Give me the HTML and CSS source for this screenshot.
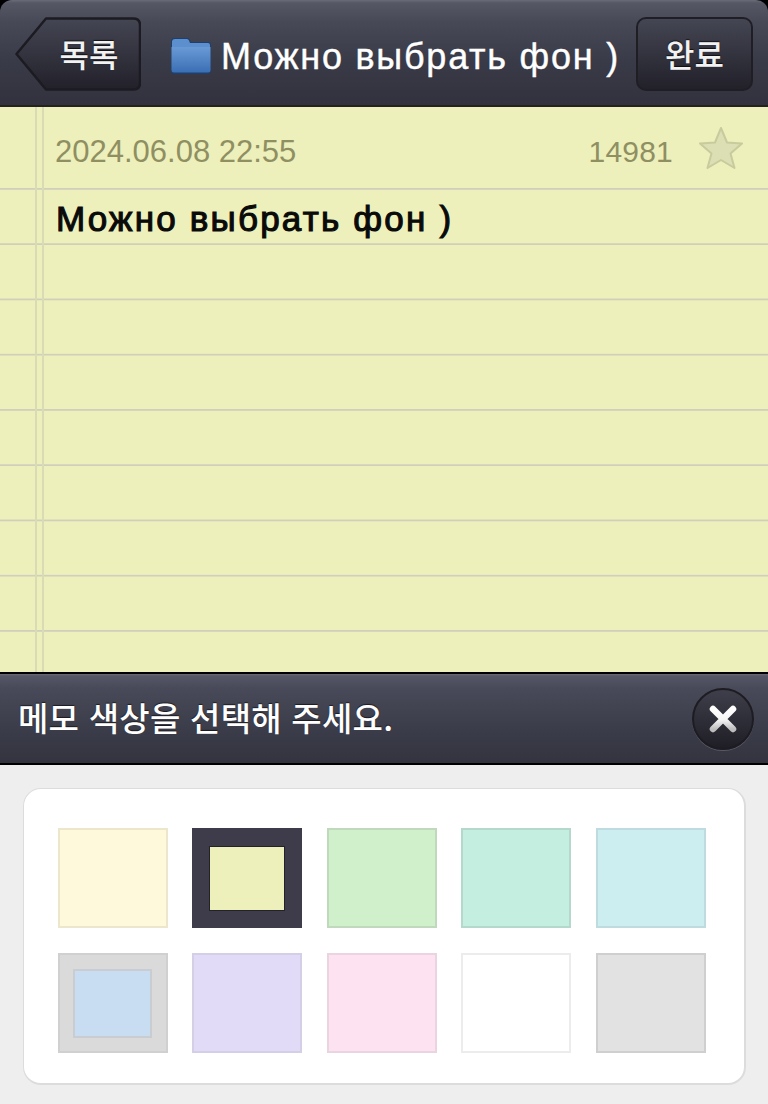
FILE: index.html
```html
<!DOCTYPE html>
<html lang="ko">
<head>
<meta charset="utf-8">
<title>메모</title>
<link rel="stylesheet" href="styles.css">
</head>
<body>
<div class="app">
  <header class="topbar">
    <button class="btn back">
      <svg class="back-shape" viewBox="0 0 126 74" aria-hidden="true">
        <defs><linearGradient id="bk" x1="0" y1="0" x2="0" y2="1"><stop offset="0" stop-color="#444653"/><stop offset="1" stop-color="#22212a"/></linearGradient></defs>
        <path d="M1.500 37 L31 1.500 H118 Q125 1.500 125 8 V66 Q125 72.500 118 72.500 H31 Z" fill="url(#bk)" stroke="#1c1b22" stroke-width="2.500" stroke-linejoin="round"/>
      </svg>
      <span class="btn-label">목록</span>
    </button>
    <div class="title">
      <svg class="folder" viewBox="0 0 42 38" aria-hidden="true">
        <defs><linearGradient id="fd" x1="0" y1="0" x2="0" y2="1"><stop offset="0" stop-color="#6a9ad6"/><stop offset="1" stop-color="#3a6fb4"/></linearGradient></defs>
        <path d="M1 5 Q1 1 4 1 H17 Q19 1 20 3 L21 5 H38 Q41 5 41 8 V34 Q41 37 38 37 H4 Q1 37 1 34 Z" fill="#1f3f6c"/>
        <path d="M2 5 Q2 2 5 2 H17 Q18.500 2 19 3.500 L20 6 H38 Q40 6 40 8 V12 H2 Z" fill="#5c8fce"/>
        <path d="M1.500 10 H40.500 V33 Q40.500 35.500 38 35.500 H4 Q1.500 35.500 1.500 33 Z" fill="url(#fd)"/>
      </svg>
      <span>Можно выбрать фон )</span>
    </div>
    <button class="btn done"><span class="btn-label">완료</span></button>
  </header>

  <main class="paper">
    <div class="meta">
      <span class="date">2024.06.08 22:55</span>
      <span class="count">14981</span>
      <svg class="star" viewBox="0 0 46 44" aria-hidden="true">
        <path d="M23 2 L29 16.500 L44 17.500 L32.500 27.500 L36.500 42 L23 34 L9.500 42 L13.500 27.500 L2 17.500 L17 16.500 Z" fill="#dcdfb4" stroke="#c8cb9c" stroke-width="2" stroke-linejoin="round"/>
      </svg>
    </div>
    <h1 class="memo">Можно выбрать фон )</h1>
  </main>

  <section class="picker-bar">
    <span class="picker-title">메모 색상을 선택해 주세요.</span>
    <button class="close" aria-label="닫기">
      <svg viewBox="0 0 30 30" class="close-x" aria-hidden="true">
        <defs><linearGradient id="cx" x1="0" y1="0" x2="0" y2="1"><stop offset="0" stop-color="#ffffff"/><stop offset=".55" stop-color="#f4f4f4"/><stop offset="1" stop-color="#bdbdbd"/></linearGradient></defs>
        <path d="M5 5 L15 15 L25 5 M5 25 L15 15 L25 25" stroke="url(#cx)" stroke-width="6.500" stroke-linecap="round" stroke-linejoin="round" fill="none"/>
      </svg>
    </button>
  </section>

  <section class="picker">
    <div class="card">
      <div class="swatch yellow"></div>
      <div class="swatch selected"><div class="inner lime"></div></div>
      <div class="swatch green"></div>
      <div class="swatch mint"></div>
      <div class="swatch sky"></div>
      <div class="swatch framed"><div class="inner blue"></div></div>
      <div class="swatch purple"></div>
      <div class="swatch pink"></div>
      <div class="swatch white"></div>
      <div class="swatch gray"></div>
    </div>
  </section>
</div>
</body>
</html>
```

FILE: styles.css
```css
* { box-sizing: border-box; }
html, body { margin: 0; padding: 0; background: #000; }
body { width: 768px; height: 1104px; overflow: hidden; font-family: "Liberation Sans", "Noto Sans CJK KR", sans-serif; }
.app { display: flex; flex-direction: column; width: 768px; height: 1104px; }

.topbar {
  flex: 0 0 107px;
  display: flex;
  align-items: flex-start;
  padding: 17px 15px 0;
  border-radius: 12px 12px 0 0;
  border-bottom: 2px solid #24221f;
  background: linear-gradient(180deg, #6a6c78 0, #555764 3px, #474956 22px, #3a3b48 60px, #32323e 104px);
}
.btn {
  position: relative;
  height: 74px;
  padding: 0 0 2px;
  border: 0;
  background: none;
  color: #f2f2f2;
  font-family: "Noto Sans CJK KR", sans-serif;
  font-size: 32px;
  font-weight: 500;
  display: flex;
  align-items: center;
  justify-content: center;
}
.btn-label { position: relative; text-shadow: 0 -1px 1px rgba(0,0,0,.7); }
.back { flex: 0 0 126px; padding-left: 22px; }
.back-shape { position: absolute; left: 0; top: 0; width: 126px; height: 74px; }
.done {
  flex: 0 0 117px;
  border: 2px solid #1f1e25;
  border-radius: 10px;
  background: linear-gradient(180deg, #444653, #22212a);
}
.title {
  flex: 1;
  display: flex;
  align-items: center;
  gap: 9px;
  height: 80px;
  padding-left: 29px;
  color: #fff;
  font-size: 36px;
  letter-spacing: 1.750px;
  -webkit-text-stroke: .4px #fff;
  white-space: nowrap;
}
.folder { flex: 0 0 42px; width: 42px; height: 38px; margin-top: -2px; }

.paper {
  flex: 0 0 565px;
  padding-left: 56px;
  padding-right: 24px;
  background-color: #edf0bb;
  background-image:
    linear-gradient(90deg, transparent 35px, #d9dbb4 35px, #d9dbb4 37px, transparent 37px, transparent 42px, #d9dbb4 42px, #d9dbb4 44px, transparent 44px),
    repeating-linear-gradient(180deg, transparent 0, transparent 52.600px, #cfcfbb 53.500px, #cfcfbb 54.300px, transparent 55.250px);
  background-position: 0 0, 0 28px;
  background-size: 100% 100%, 100% 537px;
  background-repeat: no-repeat, no-repeat;
}
.meta {
  display: flex;
  align-items: center;
  height: 82px;
  padding-top: 8px;
  color: #8f8f62;
  font-size: 31px;
}
.date { flex: 1; margin-left: -1px; }
.count { font-size: 30px; letter-spacing: .2px; }
.star { width: 46px; height: 44px; margin-left: 25px; margin-top: -9px; }
.memo {
  margin: 0;
  height: 54px;
  line-height: 60px;
  font-size: 35px;
  font-weight: 400;
  letter-spacing: 2.200px;
  -webkit-text-stroke: 1.100px #0a0a0a;
  color: #0a0a0a;
  white-space: nowrap;
}

.picker-bar {
  flex: 0 0 93px;
  display: flex;
  align-items: center;
  justify-content: space-between;
  padding: 0 14px 0 18px;
  border-top: 2px solid #000;
  border-bottom: 2px solid #000;
  background: linear-gradient(180deg, #696b77 0, #555766 2px, #484a59 14px, #3a3b48 60px, #343440 100%);
}
.picker-title {
  padding-bottom: 3px;
  color: #fff;
  font-family: "Noto Sans CJK KR", sans-serif;
  font-size: 33px;
  font-weight: 500;
  letter-spacing: .25px;
  text-shadow: 0 -1px 1px rgba(0,0,0,.6);
}
.close {
  display: flex;
  align-items: center;
  justify-content: center;
  width: 62px;
  height: 62px;
  padding: 0;
  border: 2px solid #1d1c22;
  border-radius: 50%;
  background: linear-gradient(180deg, #3e3f4b, #1f1e26);
  box-shadow: 0 1px 0 rgba(255,255,255,.18);
}
.close-x { width: 30px; height: 30px; }

.picker {
  flex: 1;
  padding: 23px 22px 19px 23px;
  background: #eeeeee;
}
.card {
  display: grid;
  grid-template-columns: repeat(5, 110px);
  grid-template-rows: repeat(2, 100px);
  column-gap: 24.500px;
  row-gap: 25px;
  height: 297px;
  padding: 39px 0 0 33.800px;
  background: #fff;
  border: 1px solid #dcdcdc;
  border-width: 1px 2px 2px 1px;
  border-radius: 18px;
}
.swatch { border: 2px solid; display: flex; align-items: center; justify-content: center; }
.yellow { background: #fef9db; border-color: #ece7cc; }
.selected { background: #3e3c4b; border-color: #3e3c4b; }
.green { background: #d0f0cb; border-color: #c0d9bd; }
.mint { background: #c3eee0; border-color: #b4d8cc; }
.sky { background: #cdeef0; border-color: #bedcdf; }
.framed { background: #dadada; border-color: #d0d0d0; }
.purple { background: #e2dbf7; border-color: #d4cee6; }
.pink { background: #fde3f2; border-color: #ead4e0; }
.white { background: #fff; border-color: #ececec; }
.gray { background: #e2e2e2; border-color: #cfcfcf; }
.inner { width: 79px; height: 69px; border: 2px solid; }
.lime { width: 76px; height: 65px; background: #edf0bb; border-color: #23222a; border-width: 1px; }
.blue { background: #c8ddf1; border-color: #c9ccd0; }
```
